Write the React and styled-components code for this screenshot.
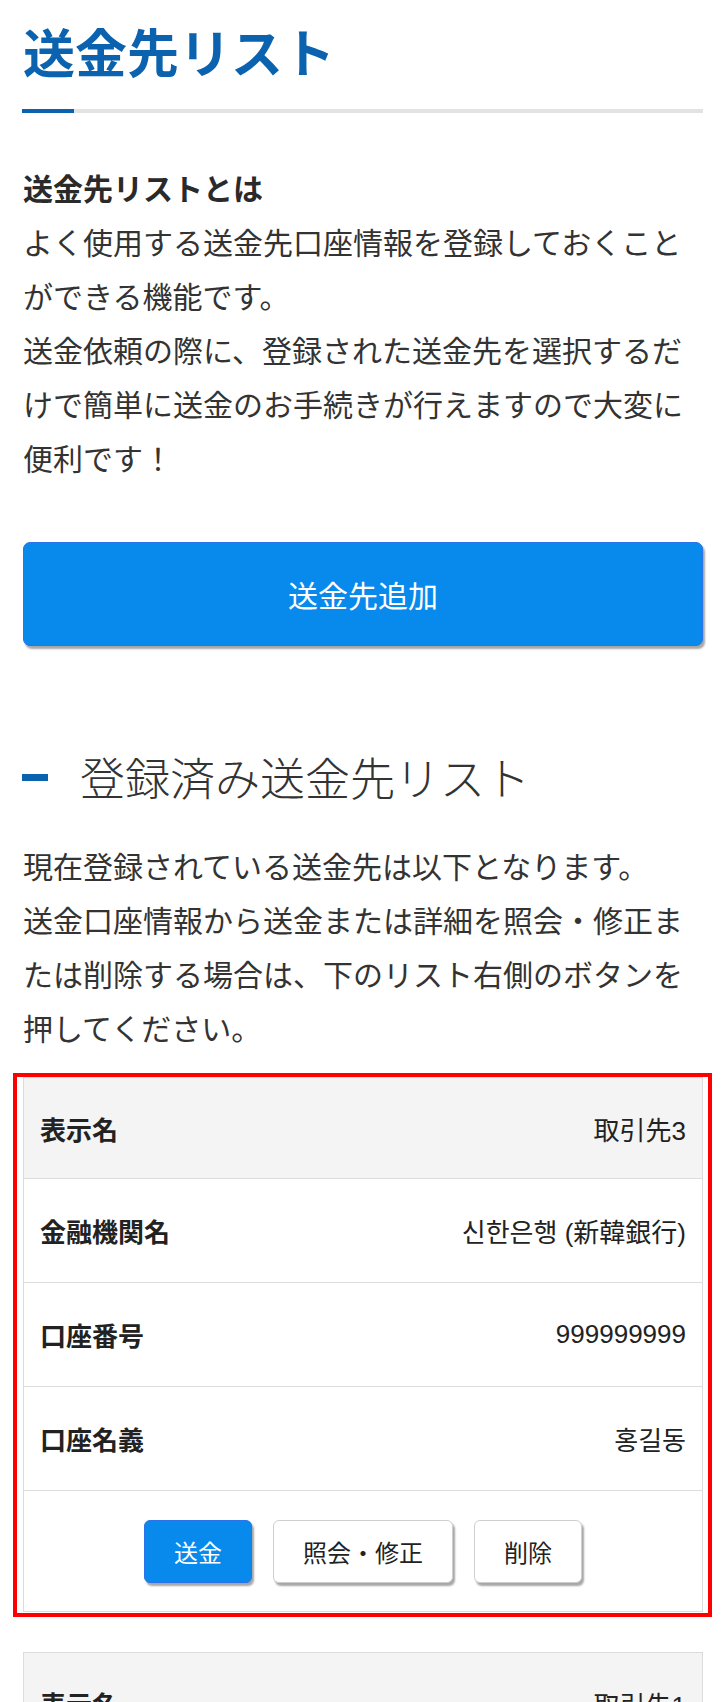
import React from "react";
import styled, { createGlobalStyle } from "styled-components";

const GlobalStyle = createGlobalStyle`
  body {
    margin: 0;
    background: #fff;
    color: #333;
    font-family: "Noto Sans CJK JP", "Noto Sans CJK KR", sans-serif;
  }
  * {
    box-sizing: border-box;
  }
`;

const Page = styled.div`
  padding: 21px 23px 0;
`;

const Title = styled.h1`
  position: relative;
  margin: 0;
  padding-bottom: 28px;
  border-bottom: 4px solid #e3e3e3;
  color: #0b62ae;
  font-size: 52px;
  font-weight: 700;
  line-height: 60px;

  &::after {
    content: "";
    position: absolute;
    left: -1px;
    bottom: -4px;
    width: 52px;
    height: 4px;
    background: #0b62ae;
  }
`;

const Lead = styled.p`
  margin: ${props => props.$top}px 0 0;
  font-size: 30px;
  line-height: 54px;

  strong {
    font-weight: 700;
    color: #2a2a2a;
  }
`;

const AddButton = styled.button`
  display: block;
  width: 100%;
  height: 104px;
  margin-top: 58px;
  border: 1px solid #2a73e8;
  border-radius: 7px;
  background: #0889ec;
  box-shadow: 2px 3px 2px rgba(0, 0, 0, 0.35);
  color: #fff;
  font-family: inherit;
  font-size: 30px;
  cursor: pointer;
`;

const SectionHeading = styled.h2`
  display: flex;
  align-items: center;
  gap: 32px;
  margin: 102px 0 0;
  color: #333;
  font-size: 45px;
  font-weight: 300;
  line-height: 58px;

  &::before {
    content: "";
    flex: none;
    width: 26px;
    height: 7px;
    margin-left: -1px;
    background: #0b62ae;
  }
`;

// red frame marking the selected entry
const Highlight = styled.div`
  margin: 19px -9px 35px -10px;
  padding: 0 5px 1px 6px;
  border: 4px solid #ff0000;
`;

const Card = styled.div`
  margin-bottom: ${props => (props.$flush ? 0 : 40)}px;
  border: 1px solid #dcdcdc;
  background: #fff;
`;

const Row = styled.div`
  display: flex;
  justify-content: space-between;
  align-items: center;
  height: ${props => (props.$head ? 100 : 104)}px;
  padding: 0 16px;
  border-top: ${props => (props.$head ? "none" : "1px solid #dcdcdc")};
  background: ${props => (props.$head ? "#f4f4f4" : "#fff")};
`;

const Label = styled.span`
  color: #222;
  font-size: 26px;
  font-weight: 700;
`;

const Value = styled.span`
  color: #222;
  font-family: "Liberation Sans", "Noto Sans CJK JP", "Noto Sans CJK KR", sans-serif;
  font-size: 26px;
`;

const ActionRow = styled.div`
  display: flex;
  justify-content: center;
  align-items: center;
  gap: 21px;
  height: 121px;
  border-top: 1px solid #dcdcdc;
`;

const ActionButton = styled.button`
  height: 63px;
  padding: 0 29px;
  border: 1px solid ${props => (props.$primary ? "#2a73e8" : "#cfcfcf")};
  border-radius: 6px;
  background: ${props => (props.$primary ? "#0889ec" : "#fff")};
  box-shadow: 2px 3px 2px rgba(0, 0, 0, 0.35);
  color: ${props => (props.$primary ? "#fff" : "#222")};
  font-family: inherit;
  font-size: 24px;
  cursor: pointer;
`;

const payees = [
  { id: 3, name: "取引先3", bank: "신한은행 (新韓銀行)", account: "999999999", holder: "홍길동" },
  { id: 1, name: "取引先1", bank: "신한은행 (新韓銀行)", account: "999999999", holder: "홍길동" }
];

const PayeeCard = ({ payee, flush }) => (
  <Card $flush={flush}>
    <Row $head>
      <Label>表示名</Label>
      <Value>{payee.name}</Value>
    </Row>
    <Row>
      <Label>金融機関名</Label>
      <Value>{payee.bank}</Value>
    </Row>
    <Row>
      <Label>口座番号</Label>
      <Value>{payee.account}</Value>
    </Row>
    <Row>
      <Label>口座名義</Label>
      <Value>{payee.holder}</Value>
    </Row>
    <ActionRow>
      <ActionButton $primary>送金</ActionButton>
      <ActionButton>照会・修正</ActionButton>
      <ActionButton>削除</ActionButton>
    </ActionRow>
  </Card>
);

const App = () => {
  const [first, ...rest] = payees;
  return (
    <Page>
      <GlobalStyle />
      <Title>送金先リスト</Title>
      <Lead $top={47}>
        <strong>送金先リストとは</strong>
        <br />
        よく使用する送金先口座情報を登録しておくことができる機能です。
        <br />
        送金依頼の際に、登録された送金先を選択するだけで簡単に送金のお手続きが行えますので大変に便利です！
      </Lead>
      <AddButton>送金先追加</AddButton>
      <SectionHeading>登録済み送金先リスト</SectionHeading>
      <Lead $top={32}>
        現在登録されている送金先は以下となります。
        <br />
        送金口座情報から送金または詳細を照会・修正または削除する場合は、下のリスト右側のボタンを押してください。
      </Lead>
      <Highlight>
        <PayeeCard payee={first} flush />
      </Highlight>
      {rest.map(payee => (
        <PayeeCard key={payee.id} payee={payee} />
      ))}
    </Page>
  );
};

export default App;
